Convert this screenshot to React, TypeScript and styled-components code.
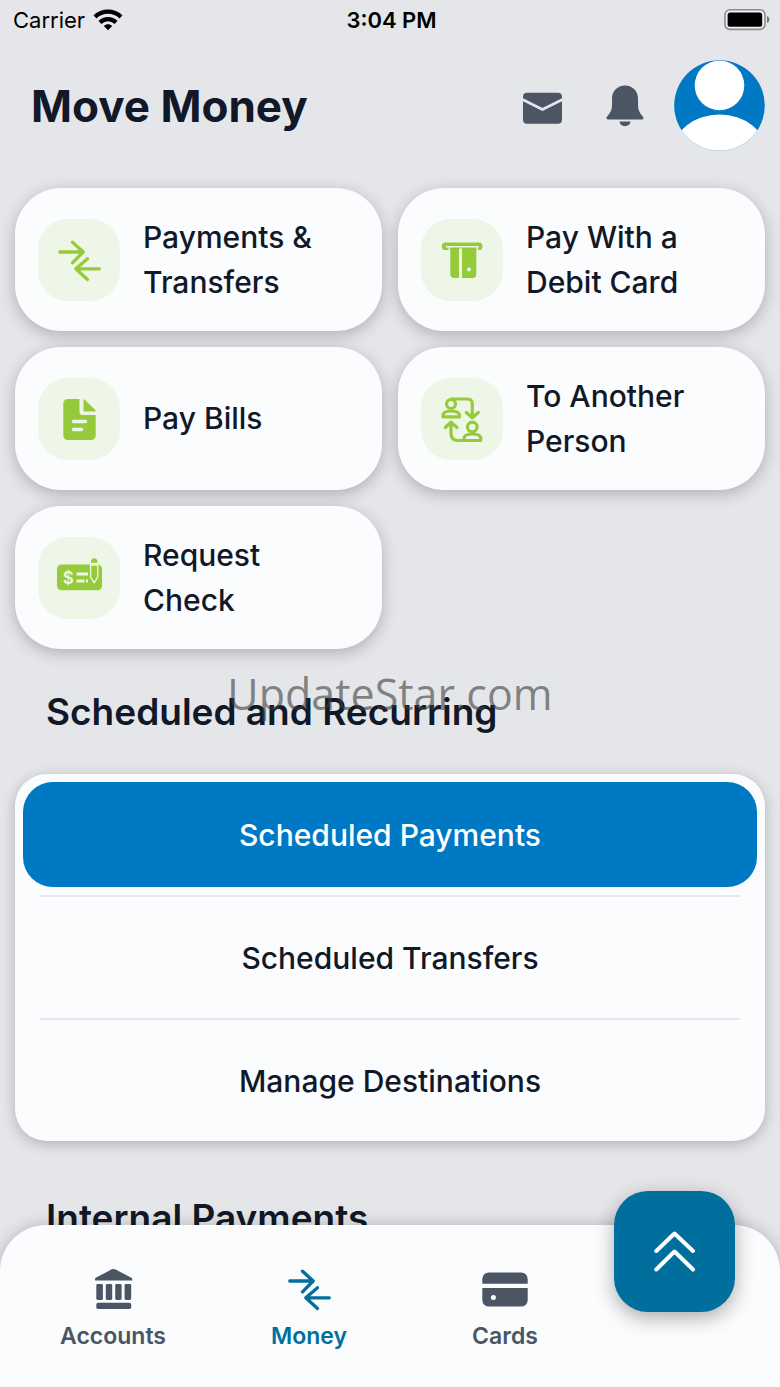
import React from "react";
import styled, { createGlobalStyle } from "styled-components";

const color = {
  page: "#e5e6ea",
  surface: "#fafcfe",
  ink: "#111827",
  slate: "#4b5563",
  blue: "#0079c4",
  teal: "#006f9d",
  green: "#95cb3a",
  greenTint: "#eef6e8",
};

const GlobalStyle = createGlobalStyle`
  *, *::before, *::after { box-sizing: border-box; }
  html, body { margin: 0; background: ${color.page}; }
  body { font-family: Inter, "Liberation Sans", sans-serif; color: ${color.ink}; }
  button { font: inherit; color: inherit; border: 0; background: none; padding: 0; cursor: pointer; }
`;

const Screen = styled.div`
  position: relative;
  display: flex;
  flex-direction: column;
  height: 100vh;
  overflow: hidden;
`;

const StatusBar = styled.div`
  display: grid;
  grid-template-columns: 1fr auto 1fr;
  align-items: center;
  height: 40px;
  padding: 0 10px 0 13px;
  font-size: 22px;
  color: #000;
`;

const Carrier = styled.span`
  display: flex;
  align-items: center;
  gap: 8px;
`;

const Clock = styled.time`
  font-weight: 600;
`;

const BatterySlot = styled.span`
  display: flex;
  justify-content: flex-end;
`;

const Header = styled.header`
  display: flex;
  align-items: center;
  height: 131px;
  padding: 0 15px 0 31px;
`;

const Title = styled.h1`
  flex: 1;
  margin: 0;
  font-size: 44px;
  font-weight: 700;
`;

const HeaderActions = styled.div`
  display: flex;
  align-items: center;
  gap: 35px;
  margin-right: 25px;
  color: ${color.slate};
`;

const IconButton = styled.button`
  display: flex;
`;

const Scroller = styled.main`
  flex: 1;
  min-height: 0;
  overflow-y: auto;
  scrollbar-width: none;
  padding: 17px 15px 0;
  &::-webkit-scrollbar { display: none; }
`;

const TileGrid = styled.div`
  display: grid;
  grid-template-columns: 1fr 1fr;
  gap: 16px;
`;

const Tile = styled.button`
  display: flex;
  align-items: center;
  gap: 23px;
  min-height: 143px;
  padding: 0 23px;
  border-radius: 46px;
  background: ${color.surface};
  box-shadow: 0 4px 16px rgba(0, 0, 0, 0.24);
  font-size: 30px;
  font-weight: 500;
  line-height: 45px;
  text-align: left;
`;

const TileIcon = styled.span`
  display: flex;
  flex: none;
  align-items: center;
  justify-content: center;
  width: 82px;
  height: 82px;
  border-radius: 30px;
  background: ${color.greenTint};
  color: ${color.green};
`;

const TileLabel = styled.span`
  max-width: 180px;
`;

const SectionTitle = styled.h2`
  margin: 0;
  padding: 40px 31px;
  font-size: 37px;
  font-weight: 600;
  line-height: 45px;
`;

const Panel = styled.div`
  display: flex;
  flex-direction: column;
  gap: 8px;
  padding: 8px;
  margin-bottom: 14px;
  border-radius: 32px;
  background: ${color.surface};
  box-shadow: 0 3px 14px rgba(0, 0, 0, 0.24);
`;

const PanelItem = styled.button<{ $active?: boolean }>`
  height: 105px;
  border-radius: 30px;
  font-size: 30px;
  font-weight: 500;
  background: ${(p) => (p.$active ? color.blue : "transparent")};
  color: ${(p) => (p.$active ? "#fff" : color.ink)};
`;

const Divider = styled.hr`
  width: calc(100% - 34px);
  height: 2px;
  margin: 0 auto;
  border: 0;
  background: #e5e7eb;
`;

const TabBar = styled.nav`
  position: relative;
  display: grid;
  grid-template-columns: repeat(3, 1fr);
  margin-top: -48px;
  padding: 40px 177px 36px 15px;
  border-radius: 46px 46px 0 0;
  background: ${color.surface};
  box-shadow: 0 0 16px rgba(0, 0, 0, 0.22);
`;

const Tab = styled.button<{ $active?: boolean }>`
  display: flex;
  flex-direction: column;
  align-items: center;
  gap: 8px;
  font-size: 23px;
  font-weight: 600;
  line-height: 30px;
  color: ${(p) => (p.$active ? color.teal : color.slate)};
`;

const ExpandButton = styled.button`
  position: absolute;
  top: -34px;
  right: 45px;
  display: flex;
  align-items: center;
  justify-content: center;
  width: 121px;
  height: 121px;
  border-radius: 34px;
  background: ${color.teal};
  color: #fff;
  box-shadow: 0 6px 20px rgba(0, 0, 0, 0.32);
`;

const Watermark = styled.div`
  position: absolute;
  top: 50%;
  left: 50%;
  transform: translate(-50%, -50%);
  font-family: "Open Sans", "Noto Sans", sans-serif;
  font-size: 43px;
  font-weight: 400;
  line-height: 56px;
  color: rgba(60, 60, 60, 0.6);
  pointer-events: none;
`;

const Icon = ({ children }: { children: React.ReactNode }) => (
  <svg width="48" height="48" viewBox="0 0 48 48" fill="currentColor" aria-hidden="true">
    {children}
  </svg>
);

const stroke = (width: number, tint = "currentColor") => ({
  fill: "none",
  stroke: tint,
  strokeWidth: width,
  strokeLinecap: "round" as const,
  strokeLinejoin: "round" as const,
});

const WifiIcon = () => (
  <svg width="30" height="22" viewBox="0 0 30 22" aria-hidden="true">
    <g fill="none" stroke="#000" strokeWidth="4.4">
      <path d="M2 7.8C9.3 0.9 20.7 0.9 28 7.8" />
      <path d="M6.900 13.300C11.500 9 18.500 9 23.100 13.300" />
    </g>
    <path d="M10.800 16.900C13.200 14.600 16.800 14.600 19.200 16.900L15 21.200Z" />
  </svg>
);

const BatteryIcon = () => (
  <svg width="46" height="22" viewBox="0 0 46 22" aria-hidden="true">
    <rect x="1" y="0.8" width="40" height="19.600" rx="5" fill="#f1f2f4" stroke="#8a8b8e" strokeWidth="1.600" />
    <rect x="3.600" y="3.400" width="34.600" height="14.400" rx="2.600" />
    <path d="M43 7C46.200 8 46.200 13 43 14Z" fill="#77787b" />
  </svg>
);

const MailIcon = () => (
  <Icon>
    <rect x="5" y="10.800" width="39" height="31" rx="4" />
    <path d="M3.500 17L24.500 27.500L45.500 17" fill="none" stroke={color.page} strokeWidth="2.800" />
  </Icon>
);

const BellIcon = () => (
  <Icon>
    <path d="M24 3.500C16.500 3.500 11 9 11 16.500V23C11 28 9.500 30.500 6.300 34.300C4.800 36 5.400 37.500 7.300 37.500H40.700C42.600 37.500 43.200 36 41.700 34.300C38.500 30.500 37 28 37 23V16.500C37 9 31.500 3.500 24 3.500Z" />
    <path d="M18.500 39.600H29.500C29.200 42.500 27 44.300 24 44.300S18.800 42.500 18.500 39.600Z" />
  </Icon>
);

const Avatar = () => (
  <svg width="91" height="91" viewBox="0 0 91 91" role="img" aria-label="Profile">
    <clipPath id="avatar-disc">
      <circle cx="45.500" cy="45.500" r="45.300" />
    </clipPath>
    <g clipPath="url(#avatar-disc)">
      <rect width="91" height="91" fill={color.blue} />
      <circle cx="45.500" cy="25.400" r="24.800" fill="#fff" />
      <ellipse cx="45.500" cy="91" rx="46" ry="36.500" fill="#fff" />
    </g>
  </svg>
);

const TransferIcon = () => (
  <Icon>
    <g {...stroke(3.300)}>
      <path d="M4.800 16H27.800M17.500 6.200L28.200 16L17.500 26.800" />
      <path d="M44.300 32.800H20.800M32.500 22.800L20.800 32.800L32.500 43.500" />
    </g>
  </Icon>
);

const DebitIcon = () => (
  <Icon>
    <rect x="3.800" y="6.500" width="40.700" height="7.500" rx="3.600" />
    <path d="M8.500 10.800H40" {...stroke(1.600, color.greenTint)} />
    <path d="M12.300 12H21V42H16.300A4 4 0 0 1 12.300 38Z" />
    <path d="M24 12H38.300V38A4 4 0 0 1 34.300 42H24Z" />
    <path d="M11.300 10.800V14.500M39.300 10.800V14.500" stroke={color.greenTint} strokeWidth="1.400" />
    <path d="M22.500 12.500V42.500" stroke={color.greenTint} strokeWidth="3" />
    <circle cx="31" cy="33.500" r="2" fill={color.greenTint} />
  </Icon>
);

const BillIcon = () => (
  <Icon>
    <path d="M12.800 4H24.500V17A3 3 0 0 0 27.500 20H40.700V40.500A4.500 4.500 0 0 1 36.200 45H12.800A4.500 4.500 0 0 1 8.300 40.500V8.500A4.500 4.500 0 0 1 12.800 4Z" />
    <path d="M28.500 4.300Q29.300 4.300 30 5L40 14.800Q40.700 15.500 40.700 16.500H28.500Z" />
    <path d="M18.500 26.500H30.500M18.500 34.500H26.500" {...stroke(3.600, color.greenTint)} />
  </Icon>
);

const PersonIcon = () => (
  <Icon>
    <g {...stroke(3.200)}>
      <circle cx="13" cy="9" r="4.500" />
      <path d="M5 21.800V20.500C5 17.500 8 16 13 16S21.500 17.500 21.500 20.500V21.800Z" />
      <path d="M13 4H29.500Q34.300 4 34.300 9V22.300M28.300 17.500L34.300 22.800L40.300 17.500" />
      <circle cx="34.300" cy="32" r="4.800" />
      <path d="M26 45.500V43.500C26 40.500 29 39 34.300 39S42.800 40.500 42.800 43.500V45.500Z" />
      <path d="M13 28V38.500Q13 45.500 20 45.500H26M7.300 32.500L13 27.200L19 32.500" />
    </g>
  </Icon>
);

const CheckIcon = () => (
  <Icon>
    <rect x="2" y="10.500" width="45" height="25.700" rx="4.500" />
    <text x="13.300" y="29.500" fontSize="17" fontWeight="600" textAnchor="middle" fill={color.greenTint}>
      $
    </text>
    <path d="M21.500 20H33M21.500 27H29.500M31 27H33" stroke={color.greenTint} strokeWidth="3" fill="none" />
    <path
      d="M35.600 11V23L39.200 28.800L42.800 23V11Z"
      fill={color.green}
      stroke={color.greenTint}
      strokeWidth="1.400"
      strokeLinejoin="round"
    />
    <path d="M35.900 8.800A3.300 4.600 0 1 1 42.500 8.800Z" />
  </Icon>
);

const BankIcon = () => (
  <Icon>
    <path d="M22.800 4.300Q24.500 3.500 26.200 4.300L42.400 12.800Q43.600 13.500 43.200 15.600H6.200Q5.600 13.500 6.800 12.800Z" />
    <rect x="7.300" y="19" width="6.600" height="16" rx="1.400" />
    <rect x="16.800" y="19" width="6.400" height="16" rx="1.400" />
    <rect x="26.200" y="19" width="6.400" height="16" rx="1.400" />
    <rect x="35.600" y="19" width="6.600" height="16" rx="1.400" />
    <rect x="7.300" y="37.700" width="34.900" height="6.400" rx="1.800" />
  </Icon>
);

const CardIcon = () => (
  <Icon>
    <path d="M1.300 18.700V14A6.600 6.600 0 0 1 7.900 7.400H40.100A6.600 6.600 0 0 1 46.700 14V18.700Z" />
    <path d="M1.300 23H46.700V35A6.600 6.600 0 0 1 40.100 41.600H7.900A6.600 6.600 0 0 1 1.300 35Z" />
    <circle cx="12.400" cy="32.400" r="2.500" fill={color.surface} />
  </Icon>
);

const ChevronsUp = () => (
  <Icon>
    <path d="M5.300 23L23.500 5.500L42 23M5.300 41.500L23.500 23.500L42 41.500" {...stroke(4)} />
  </Icon>
);

const actions = [
  { label: "Payments & Transfers", icon: <TransferIcon /> },
  { label: "Pay With a Debit Card", icon: <DebitIcon /> },
  { label: "Pay Bills", icon: <BillIcon /> },
  { label: "To Another Person", icon: <PersonIcon /> },
  { label: "Request Check", icon: <CheckIcon /> },
];

export default function App() {
  return (
    <>
      <GlobalStyle />
      <Screen>
        <StatusBar>
          <Carrier>
            Carrier
            <WifiIcon />
          </Carrier>
          <Clock>3:04 PM</Clock>
          <BatterySlot>
            <BatteryIcon />
          </BatterySlot>
        </StatusBar>
        <Header>
          <Title>Move Money</Title>
          <HeaderActions>
            <IconButton aria-label="Messages">
              <MailIcon />
            </IconButton>
            <IconButton aria-label="Notifications">
              <BellIcon />
            </IconButton>
          </HeaderActions>
          <IconButton aria-label="Profile">
            <Avatar />
          </IconButton>
        </Header>
        <Scroller>
          <TileGrid>
            {actions.map((action) => (
              <Tile key={action.label}>
                <TileIcon>{action.icon}</TileIcon>
                <TileLabel>{action.label}</TileLabel>
              </Tile>
            ))}
          </TileGrid>
          <SectionTitle>Scheduled and Recurring</SectionTitle>
          <Panel>
            <PanelItem $active>Scheduled Payments</PanelItem>
            <Divider />
            <PanelItem>Scheduled Transfers</PanelItem>
            <Divider />
            <PanelItem>Manage Destinations</PanelItem>
          </Panel>
          <SectionTitle>Internal Payments</SectionTitle>
        </Scroller>
        <TabBar>
          <Tab>
            <BankIcon />
            Accounts
          </Tab>
          <Tab $active aria-current="page">
            <TransferIcon />
            Money
          </Tab>
          <Tab>
            <CardIcon />
            Cards
          </Tab>
          <ExpandButton aria-label="More">
            <ChevronsUp />
          </ExpandButton>
        </TabBar>
        <Watermark>UpdateStar.com</Watermark>
      </Screen>
    </>
  );
}
